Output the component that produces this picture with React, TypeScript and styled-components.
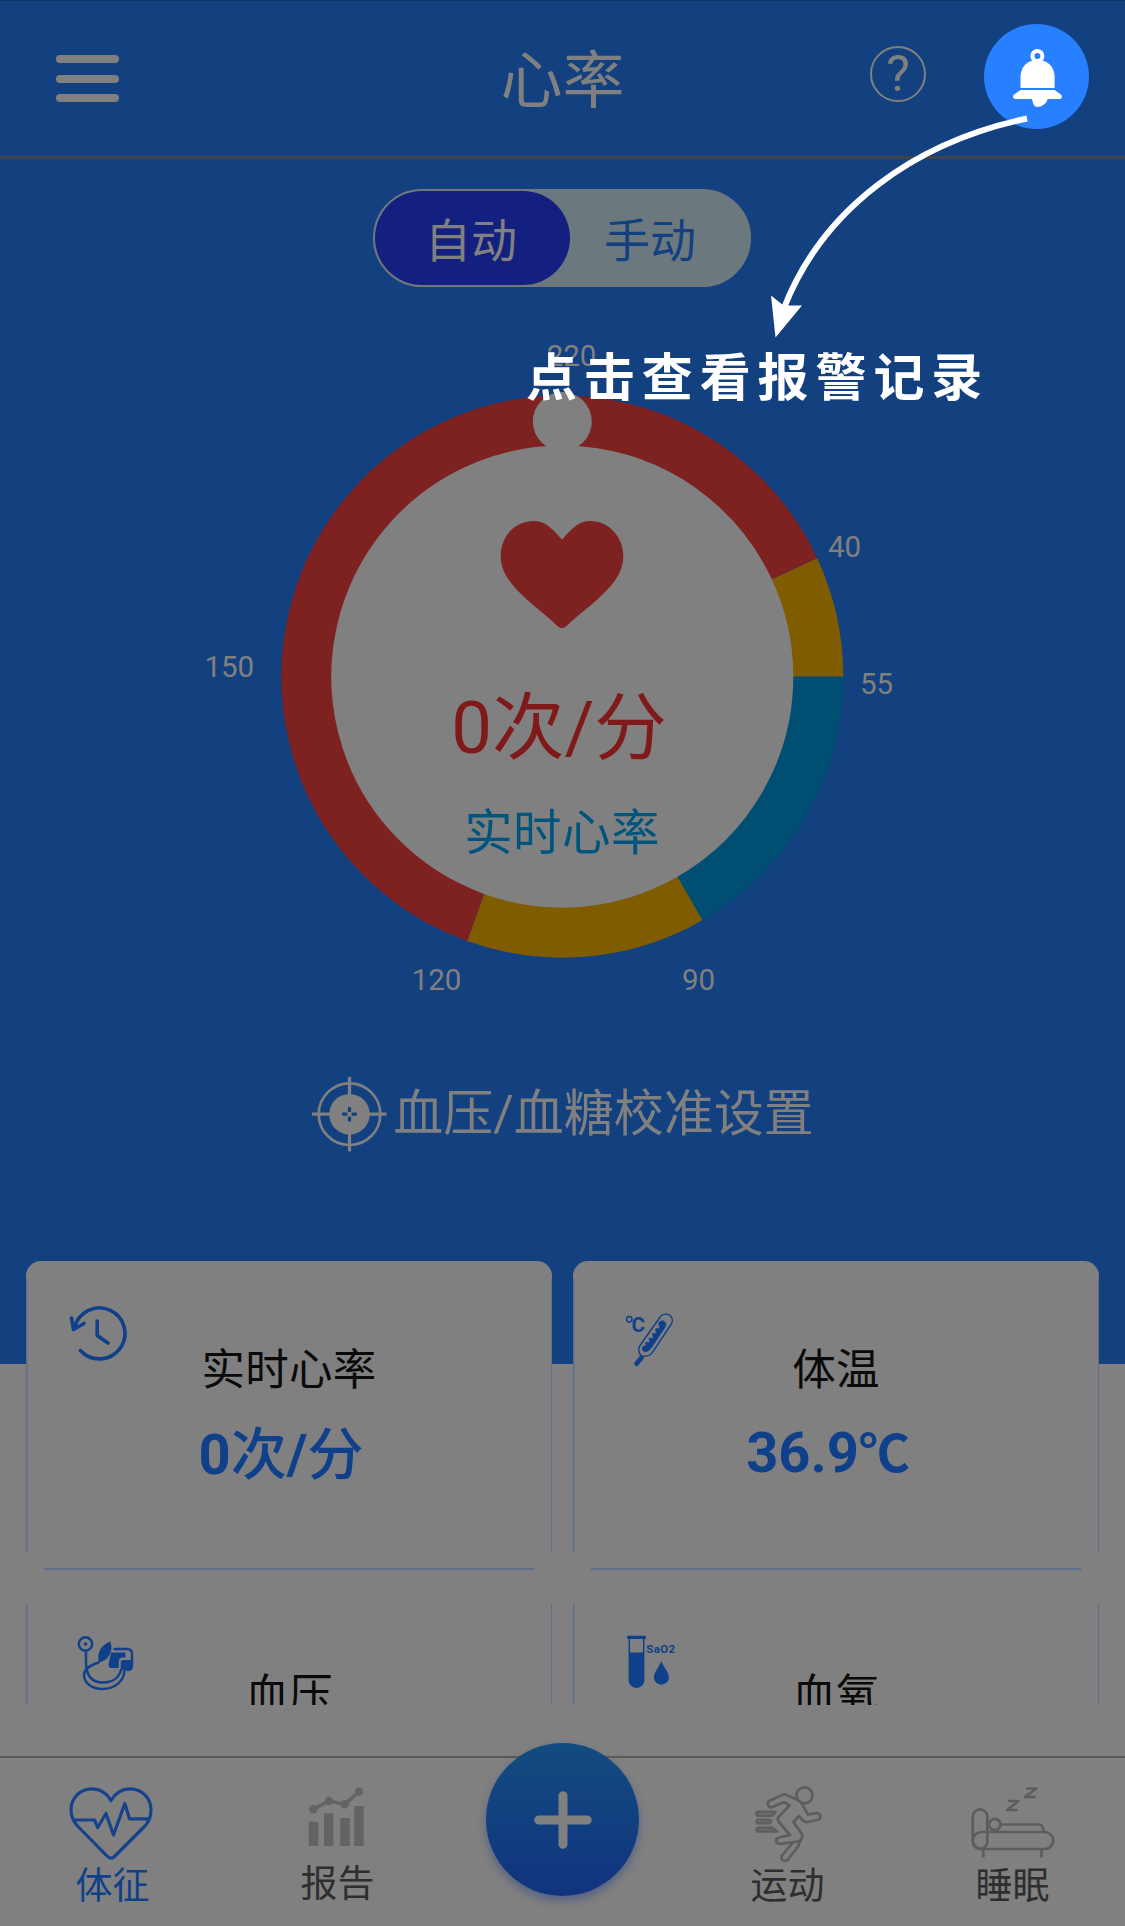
import React from "react";
import styled, { createGlobalStyle } from "styled-components";

const color = {
  blue: "#13407f",
  ink: "#0f4089",
  grey: "#808080",
  red: "#7d2121",
  amber: "#7f5c00",
  teal: "#004f73",
  icon: "#5d5d5f",
};

const Global = createGlobalStyle`
  html, body { margin: 0; padding: 0; background: ${color.grey}; }
  * { box-sizing: border-box; }
  body { font-family: Roboto, "Noto Sans CJK SC", sans-serif; }
  svg { display: block; flex: none; }
`;

const Screen = styled.div`
  position: relative;
  width: 1125px;
  height: 1926px;
  overflow: hidden;
  display: flex;
  flex-direction: column;
  background: ${color.grey};
`;

const Hero = styled.section`
  height: 1364px;
  flex: none;
  display: flex;
  flex-direction: column;
  align-items: center;
  background: ${color.blue};
  box-shadow: inset 0 1px 0 #103566;
`;

const Header = styled.header`
  width: 100%;
  height: 159px;
  flex: none;
  display: grid;
  grid-template-columns: 1fr auto 1fr;
  align-items: center;
  padding: 0 36px 0 56px;
  border-bottom: 3px solid #40444a;
`;

const Menu = styled.div`
  display: flex;
  flex-direction: column;
  gap: 11.5px;
  margin-top: 1px;
`;

const MenuBar = styled.span`
  width: 63px;
  height: 8px;
  border-radius: 4px;
  background: ${color.grey};
`;

const Title = styled.h1`
  margin: 7px 20px 0 0;
  font-size: 62px;
  line-height: 80px;
  font-weight: 400;
  color: ${color.grey};
`;

const Actions = styled.div`
  display: flex;
  justify-content: flex-end;
  align-items: center;
  gap: 58px;
`;

const Help = styled.div`
  width: 56px;
  height: 56px;
  margin-bottom: 8px;
  border: 2.5px solid ${color.grey};
  border-radius: 50%;
  display: flex;
  align-items: center;
  justify-content: center;
  font-size: 50px;
  line-height: 50px;
  color: ${color.grey};
`;

const BellButton = styled.div`
  width: 105px;
  height: 105px;
  margin-bottom: 3px;
  border-radius: 50%;
  background: #2680ff;
  display: flex;
  align-items: center;
  justify-content: center;
`;

const Switch = styled.div`
  width: 378px;
  height: 98px;
  flex: none;
  margin: 30px 1px 0 0;
  display: flex;
  border-radius: 49px;
  border: 2px solid #71777c;
  background: #6b797e;
`;

const SwitchOption = styled.div<{ $on?: boolean }>`
  width: ${(p) => (p.$on ? 195 : 160)}px;
  height: 94px;
  padding: ${(p) => (p.$on ? "6px 3px 0 0" : "6px 0 0 0")};
  border-radius: 47px;
  display: flex;
  align-items: center;
  justify-content: center;
  font-size: 46px;
  line-height: 60px;
  color: ${(p) => (p.$on ? color.grey : "#13407f")};
  background: ${(p) => (p.$on ? "#13207f" : "transparent")};
`;

const Dial = styled.div`
  width: 740px;
  height: 680px;
  margin: 43px 1px 0 0;
  flex: none;
  display: grid;
  & > * { grid-area: 1 / 1; }
`;

const Reading = styled.div`
  display: flex;
  flex-direction: column;
  align-items: center;
  padding-top: 190px;
`;

const Rate = styled.div`
  margin: 51px 0 0 -6px;
  font-size: 72.5px;
  line-height: 96px;
  color: #801a1a;
`;

const RateLabel = styled.div`
  margin-top: 25px;
  font-size: 48.5px;
  line-height: 64px;
  letter-spacing: 0.4px;
  color: #00557f;
`;

const Calibrate = styled.div`
  margin-top: 66px;
  display: flex;
  align-items: center;
  gap: 6px;
  font-size: 50px;
  line-height: 76px;
  color: ${color.grey};
`;

const Cards = styled.section`
  height: 444px;
  flex: none;
  margin: -103px 26px 0 26px;
  overflow: hidden;
  display: grid;
  grid-template-columns: 526px 526px;
  grid-auto-rows: 309px;
  column-gap: 21px;
  row-gap: 16px;
`;

const Card = styled.article`
  position: relative;
  display: flex;
  flex-direction: column;
  align-items: center;
  padding-top: 80px;
  border-radius: 15px;
  background:
    linear-gradient(#5e6f8c, #5e6f8c) 18px 100% / calc(100% - 36px) 2px no-repeat,
    linear-gradient(#5e6f8c, #5e6f8c) 0 18px / 1.5px calc(100% - 36px) no-repeat,
    linear-gradient(#5e6f8c, #5e6f8c) 100% 18px / 1.5px calc(100% - 36px) no-repeat,
    ${color.grey};
`;

const CardIcon = styled.div<{ $left: number; $top: number }>`
  position: absolute;
  left: ${(p) => p.$left}px;
  top: ${(p) => p.$top}px;
`;

const CardTitle = styled.div`
  font-size: 43.5px;
  line-height: 60px;
  letter-spacing: 0.3px;
  color: #0a0a0a;
`;

const CardValue = styled.div`
  height: 70px;
  margin: 14px 16px 0 0;
  font-size: 56px;
  line-height: 70px;
  font-weight: 700;
  color: ${color.ink};
`;

const Unit = styled.span<{ $small?: boolean }>`
  font-family: "Noto Sans CJK SC", sans-serif;
  font-size: ${(p) => (p.$small ? 51 : 56)}px;
  font-weight: ${(p) => (p.$small ? 700 : 500)};
`;

const Tabs = styled.nav`
  height: 170px;
  margin-top: auto;
  flex: none;
  display: grid;
  grid-template-columns: repeat(5, 1fr);
  border-top: 2px solid #5a5a5a;
`;

const Tab = styled.div<{ $active?: boolean; $top: number; $gap: number; $shift?: number }>`
  display: flex;
  flex-direction: column;
  align-items: center;
  padding-top: ${(p) => p.$top}px;
  font-size: 37px;
  line-height: 44px;
  color: ${(p) => (p.$active ? "#0f4089" : "#2e2e30")};
  & > svg { margin-right: ${(p) => p.$shift ?? 0}px; }
  & > span { margin-top: ${(p) => p.$gap}px; }
`;

const AddButton = styled.div`
  width: 153px;
  height: 153px;
  margin: -15px auto 0;
  border-radius: 50%;
  display: flex;
  align-items: center;
  justify-content: center;
  background: linear-gradient(#124c80, #11337f);
  box-shadow: 0 5px 9px rgba(19, 52, 140, 0.4);
`;

/* Coach mark drawn above the screen */
const Guide = styled.div`
  position: absolute;
  left: 0;
  top: 0;
`;

const GuideText = styled.div`
  position: absolute;
  left: 526px;
  top: 343px;
  white-space: nowrap;
  font-size: 51px;
  line-height: 72px;
  letter-spacing: 6.9px;
  font-weight: 700;
  color: #fff;
`;

const CX = 562.8;
const CY = 676.6;
const polar = (r: number, deg: number) => {
  const a = (deg * Math.PI) / 180;
  return `${CX + r * Math.cos(a)} ${CY + r * Math.sin(a)}`;
};
const arc = (from: number, to: number) =>
  `M${polar(256, from)} A256 256 0 ${to - from > 180 ? 1 : 0} 1 ${polar(256, to)}`;

const segments = [
  { from: 0, to: 60.1, stroke: color.teal },
  { from: 60.1, to: 109.8, stroke: color.amber },
  { from: 109.8, to: 335.1, stroke: color.red },
  { from: 335.1, to: 360, stroke: color.amber },
];

const marks = [
  { x: 572, y: 366, t: "220" },
  { x: 845, y: 557, t: "40" },
  { x: 877, y: 693.5, t: "55" },
  { x: 699, y: 989.5, t: "90" },
  { x: 437, y: 989.5, t: "120" },
  { x: 229.8, y: 677.2, t: "150" },
];

const Ring = () => (
  <svg width="740" height="680" viewBox="192.5 330 740 680">
    <circle cx={CX} cy={CY} r="232" fill={color.grey} />
    {segments.map((s) => (
      <path key={s.from} d={arc(s.from, s.to)} fill="none" stroke={s.stroke} strokeWidth="50" />
    ))}
    <circle cx={CX} cy="421.5" r="29.5" fill={color.grey} />
    {marks.map((m) => (
      <text key={m.t} x={m.x} y={m.y} textAnchor="middle" fontSize="29.5" fill={color.grey}>
        {m.t}
      </text>
    ))}
  </svg>
);

const HeartIcon = () => (
  <svg width="124" height="110" viewBox="500 520 124 110">
    <path
      d="M562 539.500C553 530 546 521 534.500 521C514 520.8 500.700 537 500.700 556C500.700 568 506 578 516 589C529 603 545 614 558 626.500Q562 629.500 566 626.500C579 614 595 603 608 589C618 578 623.300 568 623.300 556C623.300 537 609 520.8 589.500 521C578 521 571 530 562 539.500Z"
      fill={color.red}
    />
  </svg>
);

const Bell = () => (
  <svg width="52" height="60" viewBox="1011 47 52 60">
    <circle cx="1037.400" cy="56" r="5" fill="none" stroke="#fff" strokeWidth="4" />
    <path d="M1020.500 88V77C1020.500 67 1027 60 1037.500 60S1054.600 67 1054.600 77V88Z" fill="#fff" />
    <path d="M1020.500 90H1054.600L1061.500 95Q1063 99 1059.500 99H1047.500C1047 103.500 1041 107 1037.500 107S1033 103.500 1032 99H1015.500Q1012 99 1013.500 95Z" fill="#fff" />
  </svg>
);

const Target = () => (
  <svg width="76" height="76" viewBox="311.500 1076 76 76" fill="none" stroke={color.grey}>
    <circle cx="350" cy="1114.200" r="30.800" strokeWidth="2.600" />
    <circle cx="350" cy="1114.200" r="20.300" fill={color.grey} stroke="none" />
    <path d="M350 1077V1096M350 1132V1151.500M312.500 1114.200H332M368 1114.200H387" strokeWidth="3.200" />
    <path d="M350 1107V1112M350 1116.500V1121.500M342.800 1114.200H347.800M352.200 1114.200H357.200" stroke={color.blue} strokeWidth="3.200" />
  </svg>
);

const History = () => (
  <svg width="60" height="60" viewBox="69 1303 60 60" fill="none" stroke={color.ink} strokeWidth="3.600" strokeLinecap="round" strokeLinejoin="round">
    <path d="M75.500 1327A25.500 25.500 0 1 1 81.500 1349.500" />
    <path d="M72.500 1317L74.500 1328.500L85 1322.500" />
    <path d="M98.200 1320V1334.500L109 1342" />
  </svg>
);

const Thermometer = () => (
  <svg width="54" height="64" viewBox="623 1308 54 64" fill="none" stroke={color.ink}>
    <circle cx="629.300" cy="1318.300" r="2.700" strokeWidth="1.500" />
    <text x="631.500" y="1330.500" fontSize="20.500" fontWeight="700" fill={color.ink} stroke="none">C</text>
    <path d="M660.500 1315.500C663 1312.300 668 1312.500 670.300 1314.800C672.500 1317 673 1320.500 671 1323.500L653 1350.500Q650.500 1355.500 642.500 1355.500L639.500 1352.500Q637.800 1347.500 640 1344.500Z" strokeWidth="1.400" />
    <path d="M641.500 1356.500L636.500 1362.700" strokeWidth="4.600" strokeLinecap="round" />
    <path d="M658.500 1322C661 1319 664 1319.500 665.200 1321.500C666.500 1323.500 665.500 1325.500 664.500 1327L651.500 1346.500C649.500 1349.500 646 1351.500 643.800 1350.500C642 1349 642 1347 643.500 1345L646.500 1345L645.500 1341.500L650 1341.500L649 1337.500L653.500 1337L652.500 1332.500L656.500 1332.500L655.500 1328L660 1327.500Z" fill={color.ink} stroke={color.ink} strokeWidth="0.800" />
  </svg>
);

const Pressure = () => (
  <svg width="60" height="60" viewBox="75 1632 60 60" fill="none" stroke={color.ink} strokeWidth="2.500" strokeLinecap="round">
    <circle cx="85.500" cy="1643" r="6.700" />
    <circle cx="85.500" cy="1643" r="1.800" fill={color.ink} stroke="none" />
    <path d="M86 1650V1661C86 1676 93 1681.500 103 1681.500C112 1681.500 119 1677 121 1669" />
    <path d="M98.500 1661.500C91 1664 84 1668 84 1674C84 1682 92 1688 102.500 1688C114 1688 123.500 1681 124.500 1670" />
    <path d="M109.700 1641.500C102 1644.500 97.500 1652 99.500 1660.500C107 1658.500 113 1651 109.700 1641.500Z" fill={color.ink} strokeWidth="1.600" />
    <path d="M114.500 1648H127Q132 1648 132 1653V1664Q132 1669 128 1669" strokeWidth="2.400" />
    <path d="M111 1651.500H125.500V1656.500H122Q118.700 1657 118.700 1661V1667H111Q108.500 1667 108.500 1663.500Z" fill={color.ink} stroke="none" />
    <path d="M120.700 1669V1661Q120.700 1659 123.500 1659H131.500V1666Q131.500 1669.500 127 1669.500Z" fill={color.ink} stroke="none" />
  </svg>
);

const Oxygen = () => (
  <svg width="54" height="58" viewBox="625 1632 54 58" fill={color.ink}>
    <rect x="627" y="1634.700" width="19" height="3.200" rx="1" />
    <path d="M629.300 1637V1679A7.200 7.200 0 0 0 643.700 1679V1637" fill="none" stroke={color.ink} strokeWidth="1.500" />
    <path d="M629 1651.500H644V1679A7.500 7.500 0 0 1 629 1679Z" />
    <path d="M661.300 1660C664 1667 669 1671.500 669 1676.500A7.600 7.200 0 0 1 653.800 1676.500C653.800 1671.500 658.500 1667 661.300 1660Z" />
    <text x="646.200" y="1652" fontSize="11.500" fontWeight="700" textLength="29">SaO2</text>
  </svg>
);

const VitalsIcon = () => (
  <svg width="86" height="76" viewBox="68.500 1784 86 76" fill="none" stroke="#15428a" strokeWidth="3.200" strokeLinejoin="round">
    <path d="M111.500 1800.500C107 1792.500 100 1788.800 92.500 1788.800C80 1788.800 71.500 1798.500 71.500 1810C71.500 1817 74 1821.500 78 1826L107.500 1856Q111.500 1860 115.500 1856L145.500 1826C149.500 1821.500 151.500 1817 151.500 1810C151.500 1798.500 143 1788.800 130.500 1788.800C123 1788.800 116 1792.500 111.500 1800.500Z" />
    <path d="M73.500 1820H95L98.200 1827.500L106.500 1813.500L114 1835L125.300 1803.500L130 1818.800H150" />
  </svg>
);

const ReportIcon = () => (
  <svg width="60" height="76" viewBox="306 1784 60 76" fill="#636363">
    <path d="M308.700 1820.700h9.700V1845h-9.700zM324 1812.300h9.500V1845H324zM340.200 1817h9.500V1845h-9.500zM354.300 1805h9.400V1845h-9.400z" />
    <path d="M313.300 1808.300L329 1800L344.600 1803.300L359 1790.700" fill="none" stroke="#636363" strokeWidth="3.400" />
    <circle cx="313.300" cy="1808.300" r="4.200" />
    <circle cx="329" cy="1800" r="4.200" />
    <circle cx="344.600" cy="1803.300" r="4.200" />
    <circle cx="359" cy="1790.700" r="4.200" />
  </svg>
);

const RunIcon = () => (
  <svg width="72" height="80" viewBox="752.500 1784 72 80" fill="none" stroke={color.icon} strokeWidth="2.700" strokeLinejoin="round" strokeLinecap="round">
    <circle cx="805" cy="1796.300" r="8" />
    <path d="M797.500 1800.500L786 1795.500Q784.500 1795 783 1795.800L770.500 1801.500C766 1804 769 1809.500 773 1808L783.500 1803.500Q785 1803 790 1806.500L779 1818Q777.500 1820 779 1822.500L790.500 1836L779.500 1838.500C775 1840 776 1845 781 1844.800L798 1842.500Q801.500 1842 802.500 1838.500Q803.500 1836 801 1833L794 1823L799.500 1817L803.500 1821.500Q805 1823.500 808 1823L818 1821C822.500 1819.500 821.500 1814 817 1814L808.500 1815.500L802.500 1805" />
    <path d="M793 1844L782.500 1856.500C780 1860.500 785.500 1863.500 788.500 1860.500L798.500 1847.500L801 1841" />
    <path d="M776.500 1812.500H758Q755.500 1815 758 1817H773ZM770 1820.500H758Q755.500 1822.500 758 1824.500H770L772 1822.500ZM773 1828.500H758Q755.500 1830.500 758 1832.700H778Z" strokeWidth="2.200" fill="#6a6a6b" />
  </svg>
);

const SleepIcon = () => (
  <svg width="86" height="80" viewBox="969.500 1784 86 80" fill="none" stroke={color.icon} strokeWidth="2.700" strokeLinejoin="round">
    <rect x="972.300" y="1810.300" width="14.500" height="39.500" rx="7.200" />
    <rect x="972.300" y="1833" width="80.500" height="17" rx="8.500" />
    <circle cx="994.300" cy="1825.500" r="5.700" />
    <path d="M1000.500 1825.500H1038Q1041 1825.500 1042 1828L1043.500 1833M982.800 1850V1858.500M1041 1850V1858.500" />
    <path d="M1025.500 1789.500H1036L1024.500 1798H1035M1007.500 1802H1018L1006.500 1811H1017" strokeWidth="2.500" />
  </svg>
);

const Plus = () => (
  <svg width="58" height="58" viewBox="0 0 58 58">
    <path d="M29 4.800V53.200M4.800 29H53.200" stroke={color.grey} strokeWidth="9" strokeLinecap="round" />
  </svg>
);

const Arrow = () => (
  <svg width="1125" height="400" viewBox="0 0 1125 400">
    <path d="M1027 118.500C915 142 823 208 784 308" fill="none" stroke="#fff" strokeWidth="6" />
    <path d="M771 295.500L783.500 305.500L802 305.500L775.500 337.500Z" fill="#fff" />
  </svg>
);

const cards = [
  { title: "实时心率", value: <>0<Unit>次</Unit>/<Unit>分</Unit></>, icon: <History />, left: 42, top: 43 },
  { title: "体温", value: <>36.9<Unit $small>℃</Unit></>, icon: <Thermometer />, left: 50, top: 48 },
  { title: "血压", value: null, icon: <Pressure />, left: 49, top: 47 },
  { title: "血氧", value: null, icon: <Oxygen />, left: 52, top: 47 },
];

export default function App() {
  return (
    <>
      <Global />
      <Screen>
        <Hero>
          <Header>
            <Menu>
              <MenuBar />
              <MenuBar />
              <MenuBar />
            </Menu>
            <Title>心率</Title>
            <Actions>
              <Help>?</Help>
              <BellButton>
                <Bell />
              </BellButton>
            </Actions>
          </Header>
          <Switch>
            <SwitchOption $on>自动</SwitchOption>
            <SwitchOption>手动</SwitchOption>
          </Switch>
          <Dial>
            <Ring />
            <Reading>
              <HeartIcon />
              <Rate>0次/分</Rate>
              <RateLabel>实时心率</RateLabel>
            </Reading>
          </Dial>
          <Calibrate>
            <Target />
            血压/血糖校准设置
          </Calibrate>
        </Hero>
        <Cards>
          {cards.map((c) => (
            <Card key={c.title}>
              <CardIcon $left={c.left} $top={c.top}>
                {c.icon}
              </CardIcon>
              <CardTitle>{c.title}</CardTitle>
              {c.value && <CardValue>{c.value}</CardValue>}
            </Card>
          ))}
        </Cards>
        <Tabs>
          <Tab $active $top={26} $gap={5} $shift={3}>
            <VitalsIcon />
            <span>体征</span>
          </Tab>
          <Tab $top={27} $gap={2} $shift={3}>
            <ReportIcon />
            <span>报告</span>
          </Tab>
          <AddButton>
            <Plus />
          </AddButton>
          <Tab $top={25} $gap={2}>
            <RunIcon />
            <span>运动</span>
          </Tab>
          <Tab $top={25} $gap={2}>
            <SleepIcon />
            <span>睡眠</span>
          </Tab>
        </Tabs>
        <Guide>
          <Arrow />
          <GuideText>点击查看报警记录</GuideText>
        </Guide>
      </Screen>
    </>
  );
}
